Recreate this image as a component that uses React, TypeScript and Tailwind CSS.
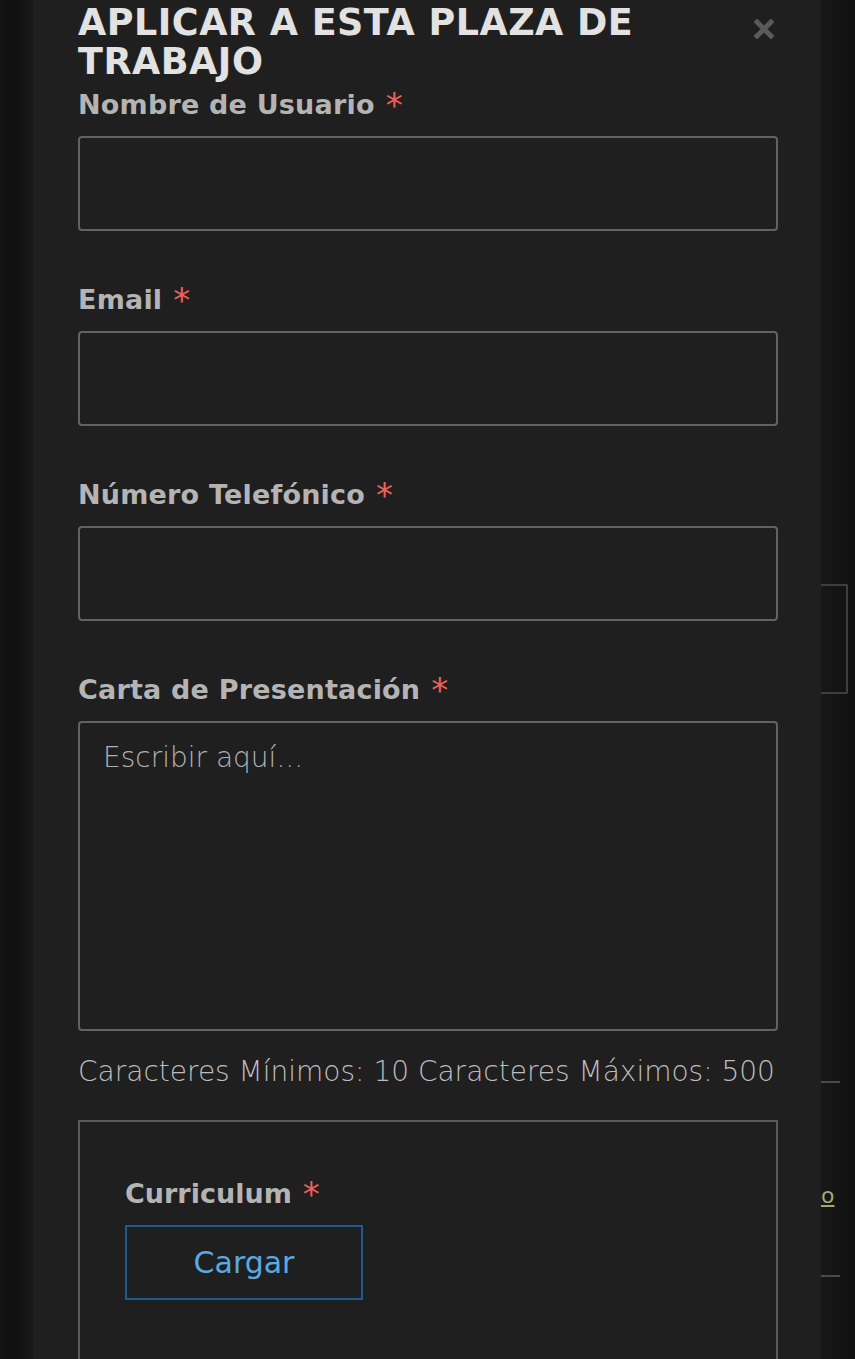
const labelFont = { fontFamily: '"DejaVu Sans", "Liberation Sans", sans-serif' };

function Req() {
  return <span className="relative top-[3px] ml-[11px] text-[34px] leading-[0] text-[#f0605a] font-normal">*</span>;
}

function Field({ label, tall }: { label: string; tall?: boolean }) {
  return (
    <div className="flex flex-col">
      <label className="h-[30px] leading-[30px] text-[27px] font-bold text-[#b4b4b4] tracking-[0.2px] whitespace-nowrap">
        {label}
        <Req />
      </label>
      {tall ? (
        <textarea
          placeholder="Escribir aquí..."
          className="mt-[16px] h-[310px] w-full resize-none rounded-[4px] border-2 border-[#626262] bg-[#1f1f1f] px-[23px] py-[14px] text-[28px] font-light text-[#c8c8c8] placeholder:text-[#b0b0b0] outline-none"
        />
      ) : (
        <input className="mt-[16px] h-[95px] w-full rounded-[4px] border-2 border-[#626262] bg-[#1f1f1f] outline-none" />
      )}
    </div>
  );
}

export default function App() {
  return (
    <div className="flex h-[1359px] w-[855px] overflow-hidden bg-[#141414]" style={labelFont}>
      {/* sombra izquierda */}
      <div className="w-[33px] shrink-0 bg-gradient-to-r from-[#141414] via-[#101010] to-[#191919]" />

      {/* modal */}
      <div className="w-[788px] shrink-0 bg-[#1f1f1f] pl-[45px] pr-[43px]">
        <div className="flex items-start justify-between">
          <h2 className="mt-[3px] text-[36.5px] font-bold uppercase leading-[39px] text-[#e2e2e2] tracking-[0.5px]">
            Aplicar a esta plaza de
            <br />
            trabajo
          </h2>
          <svg className="mr-[4px] mt-[19px]" width="20" height="20" viewBox="0 0 20 20">
            <path d="M3 3 L17 17 M17 3 L3 17" stroke="#5a5a5a" strokeWidth="5" strokeLinecap="square" />
          </svg>
        </div>

        <div className="mt-[9px] flex flex-col gap-[54px]">
          <Field label="Nombre de Usuario" />
          <Field label="Email" />
          <Field label="Número Telefónico" />
          <Field label="Carta de Presentación" tall />
        </div>

        <p className="mt-[26px] h-[30px] leading-[30px] text-[28px] font-extralight text-[#bdbdbd]">
          Caracteres Mínimos: 10 Caracteres Máximos: 500
        </p>

        <div className="mt-[33px] h-[300px] border-2 border-[#5a5a5a] px-[45px] pt-[57px]">
          <div className="h-[30px] leading-[30px] text-[27px] font-bold text-[#b4b4b4]">
            Curriculum
            <Req />
          </div>
          <button className="mt-[16px] flex h-[75px] w-[238px] items-center justify-center border-2 border-[#1d5a92] text-[30px] text-[#5aa9e2]">
            Cargar
          </button>
        </div>
      </div>

      {/* página detrás */}
      <div className="flex flex-1 flex-col bg-gradient-to-r from-[#181818] to-[#101010]">
        <div className="mt-[584px] h-[110px] w-[27px] rounded-r-[2px] border-2 border-l-0 border-[#3e3e3e]" />
        <div className="mt-[387px] h-[2px] w-[19px] bg-[#4a4a4a]" />
        <div className="mt-[101px] w-[18px] text-[22px] leading-[24px] text-[#a5a57a] underline">o</div>
        <div className="mt-[67px] h-[2px] w-[19px] bg-[#4a4a4a]" />
      </div>
    </div>
  );
}
